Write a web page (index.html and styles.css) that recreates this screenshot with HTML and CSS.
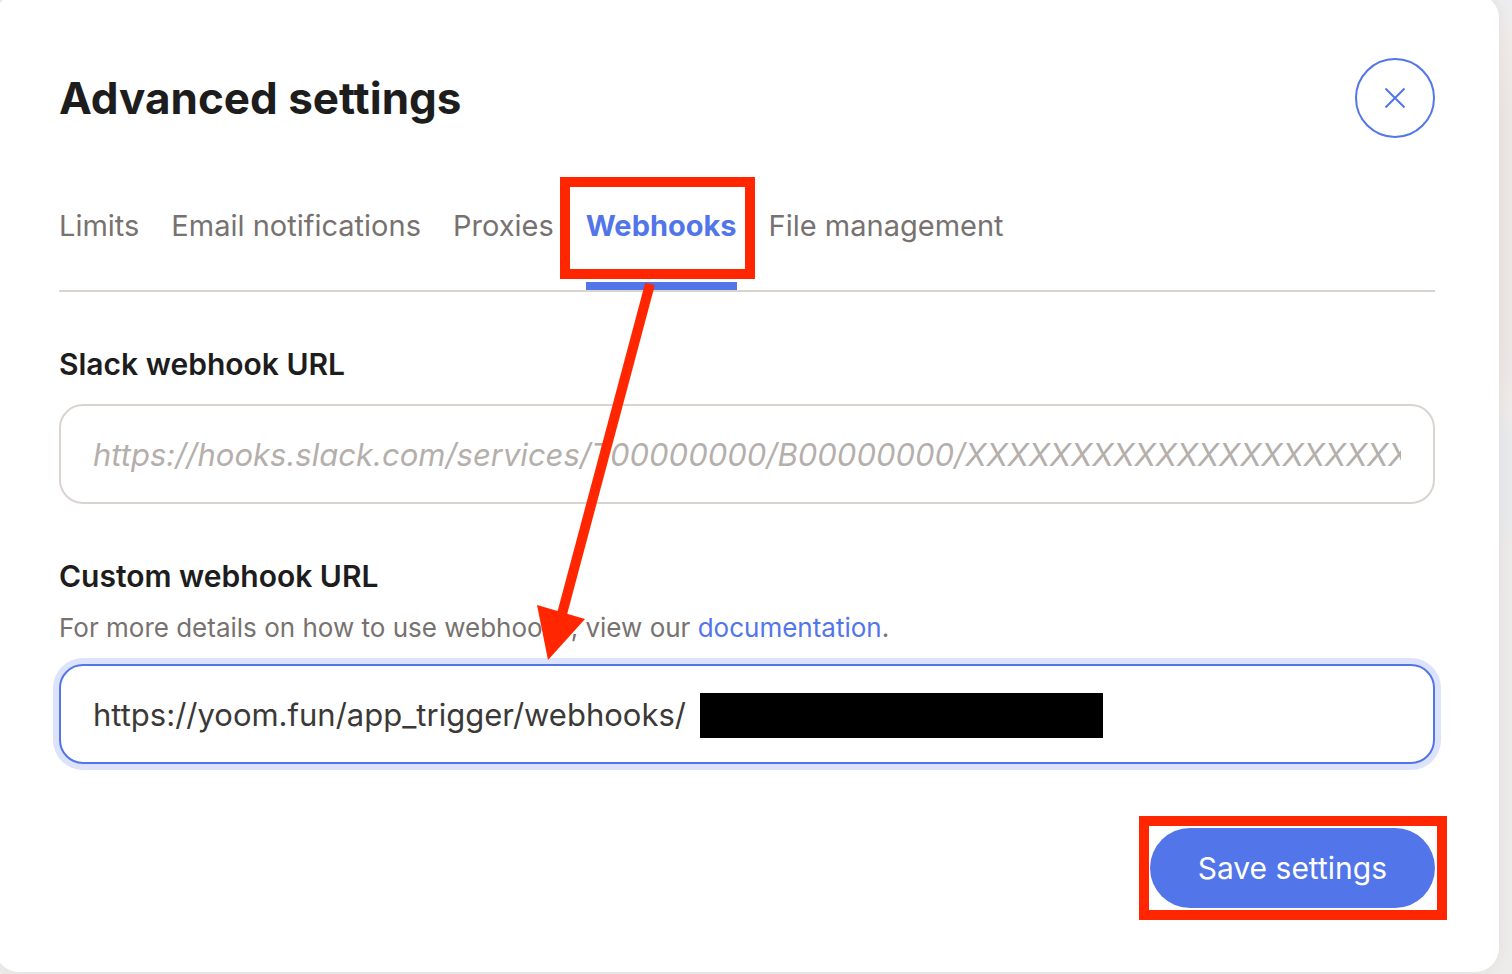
FILE: index.html
```
<!DOCTYPE html>
<html lang="en">
<head>
    <meta charset="UTF-8">
    <meta name="viewport" content="width=device-width, initial-scale=1.0">
    <title>Advanced settings</title>
    <link rel="stylesheet" href="styles.css">
</head>
<body>
    <main class="modal">
        <header class="modal-header">
            <h1>Advanced settings</h1>
            <button class="close" type="button" aria-label="Close">
                <svg width="20" height="20" viewBox="0 0 20 20" fill="none" stroke="currentColor" stroke-width="2">
                    <path d="M0.5 0.5L19.5 19.5M19.5 0.5L0.5 19.5"/>
                </svg>
            </button>
        </header>

        <nav class="tabs">
            <a class="tab" href="#limits">Limits</a>
            <a class="tab" href="#email">Email notifications</a>
            <a class="tab" href="#proxies">Proxies</a>
            <a class="tab active" href="#webhooks">Webhooks</a>
            <a class="tab" href="#files">File management</a>
        </nav>

        <form>
            <div class="field">
                <label for="slack">Slack webhook URL</label>
                <input id="slack" type="text" placeholder="https://hooks.slack.com/services/T00000000/B00000000/XXXXXXXXXXXXXXXXXXXXXXXX">
            </div>
            <div class="field">
                <label for="custom">Custom webhook URL</label>
                <p class="hint">For more details on how to use webhooks, view our <a href="#docs">documentation</a>.</p>
                <div class="input-wrap">
                    <input id="custom" class="focused" type="text" value="https://yoom.fun/app_trigger/webhooks/">
                    <span class="redacted"></span>
                </div>
            </div>
            <div class="actions">
                <div class="save-wrap">
                    <button class="save" type="button">Save settings</button>
                    <span class="mark mark-save"></span>
                </div>
            </div>
        </form>

        <span class="mark mark-tab"></span>
        <svg class="arrow" width="130" height="380" viewBox="0 0 130 380">
            <path d="M115 4L27 334" stroke="#ff2600" stroke-width="10"/>
            <path d="M2 325L50 339L13 380Z" fill="#ff2600"/>
        </svg>
    </main>
</body>
</html>
```

FILE: styles.css
```
* {
    box-sizing: border-box;
}
body {
    margin: 0;
    min-height: 100vh;
    overflow: hidden;
    display: flow-root;
    background: linear-gradient(#ededf0, #f0ebe8 4%, #ece6e5 12%, #ece6e5 35%, #efebe9 42%, #e8eaec 45%, #e8eaec 53%, #edebe9 56%, #edecea);
    font-family: Inter, "Liberation Sans", sans-serif;
    font-size: 30px;
    line-height: 48px;
    color: #1d1d1d;
}
.modal {
    position: relative;
    margin: -6px 13px 2px -5px;
    padding: 64px;
    background: #fff;
    border-radius: 24px;
    box-shadow: 0 0 16px rgba(0, 0, 0, 0.06);
}
.modal-header {
    display: flex;
    justify-content: space-between;
    align-items: center;
    margin-bottom: 64px;
}
h1 {
    margin: 0;
    font-size: 44px;
    font-weight: 700;
}
.close {
    display: flex;
    justify-content: center;
    align-items: center;
    width: 80px;
    height: 80px;
    padding: 0;
    border: 2px solid #5275ea;
    border-radius: 50%;
    background: #fff;
    color: #5275ea;
}
.tabs {
    display: flex;
    gap: 32px;
    border-bottom: 2px solid #d9d4d0;
    font-size: 29px;
}
.tab {
    padding-bottom: 32px;
    border-bottom: 8px solid transparent;
    color: #777270;
    text-decoration: none;
    white-space: nowrap;
}
.tab.active {
    border-color: #5275ea;
    color: #5275ea;
    font-weight: 700;
}
.field {
    margin-top: 48px;
}
label {
    display: block;
    margin-bottom: 16px;
    font-weight: 600;
}
.hint {
    margin: -8px 0 16px;
    font-size: 26px;
    line-height: 40px;
    color: #777270;
}
.hint a {
    color: #5275ea;
    text-decoration: none;
}
input {
    display: block;
    width: 100%;
    height: 100px;
    padding: 0 32px;
    border: 2px solid #d9d4d0;
    border-radius: 24px;
    outline: none;
    background: #fff;
    font: inherit;
    font-size: 31px;
    color: #3b3938;
}
input::placeholder {
    color: #b5afac;
    font-style: italic;
    opacity: 1;
}
.focused {
    border-color: #5275ea;
    box-shadow: 0 0 0 6px #dce3fb;
}
.input-wrap {
    position: relative;
}
.redacted {
    position: absolute;
    left: 641px;
    top: 29px;
    width: 403px;
    height: 45px;
    background: #000;
}
.actions {
    display: flex;
    justify-content: flex-end;
    margin-top: 64px;
}
.save-wrap {
    position: relative;
}
.save {
    display: block;
    height: 80px;
    padding: 0 48px;
    border: 0;
    border-radius: 40px;
    background: #5275ea;
    font: inherit;
    color: #fff;
}
.mark {
    position: absolute;
    border: 10px solid #ff2600;
    pointer-events: none;
}
.mark-save {
    inset: -12px -12px -12px -11px;
}
.mark-tab {
    left: 565px;
    top: 183px;
    width: 195px;
    height: 102px;
}
.arrow {
    position: absolute;
    left: 540px;
    top: 286px;
    pointer-events: none;
}
```
